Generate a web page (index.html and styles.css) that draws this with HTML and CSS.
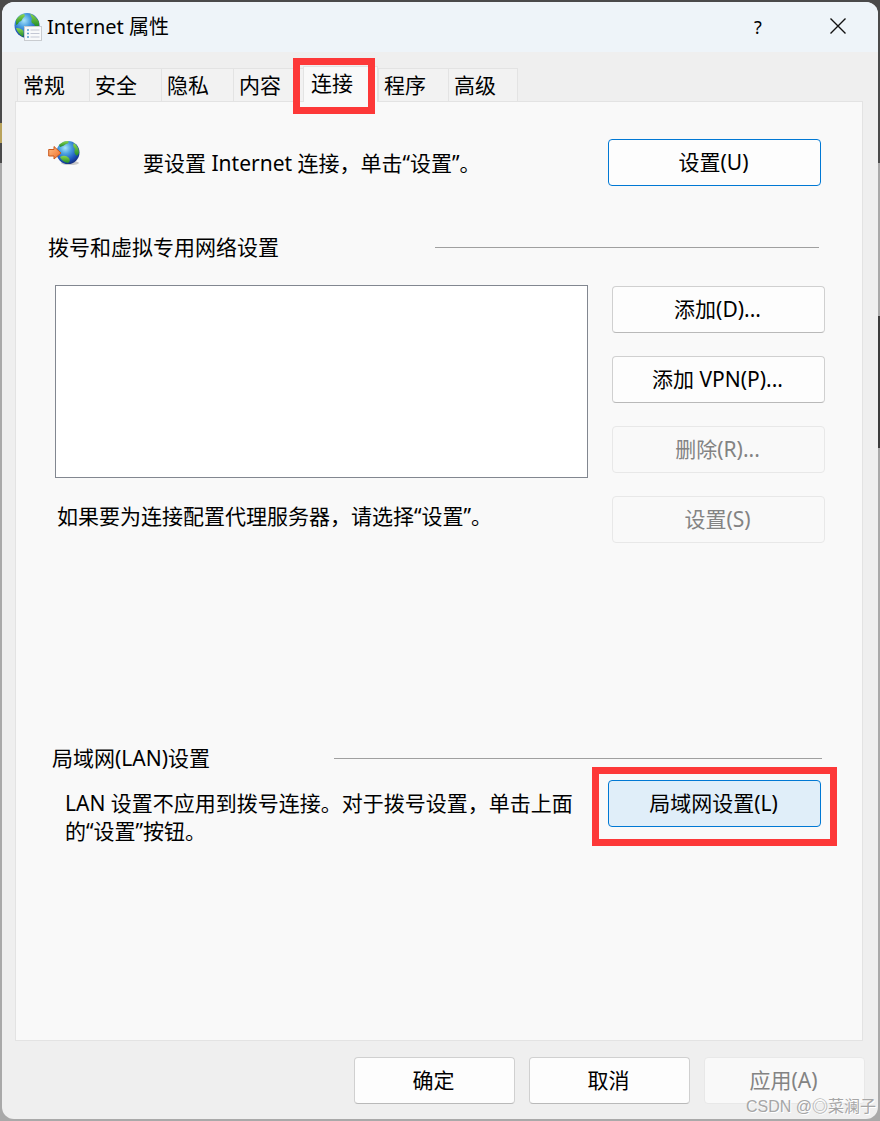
FILE: index.html
```html
<!DOCTYPE html>
<html lang="zh-CN">
<head>
<meta charset="utf-8">
<title>Internet 属性</title>
<link rel="stylesheet" href="styles.css">
</head>
<body>
<svg class="defs" width="0" height="0" aria-hidden="true">
  <defs>
    <radialGradient id="sea" cx="38%" cy="30%" r="75%">
      <stop offset="0" stop-color="#a9e4fa"/>
      <stop offset="0.35" stop-color="#4a9fe0"/>
      <stop offset="0.75" stop-color="#1c50b8"/>
      <stop offset="1" stop-color="#132a78"/>
    </radialGradient>
    <linearGradient id="land" x1="0" y1="0" x2="0" y2="1">
      <stop offset="0" stop-color="#8fd84c"/>
      <stop offset="1" stop-color="#1f8a2c"/>
    </linearGradient>
    <linearGradient id="arrow" x1="0" y1="0" x2="1" y2="1">
      <stop offset="0" stop-color="#ffc08a"/>
      <stop offset="1" stop-color="#ee6a24"/>
    </linearGradient>
  </defs>
</svg>
<main class="window">
  <header class="titlebar">
    <svg class="title-icon" viewBox="0 0 28 28" aria-hidden="true">
      <circle cx="13" cy="12.5" r="12.5" fill="url(#sea)"/>
      <path d="M2 7 Q5 2 10 1 Q12 3 9 5 Q8 8 5 9 Q4 12 2 12 Z" fill="url(#land)"/>
      <path d="M16 0.5 Q22 3 25 9 L25 13 Q21 15 20 11 Q16 10 18 6 Z" fill="url(#land)"/>
      <path d="M2 15 Q7 15 9.5 18 Q10 22 9 24 Q4 21 2 15 Z" fill="url(#land)"/>
      <rect x="10.5" y="13.5" width="17" height="14" fill="#f8f9fb" stroke="#c9ccd0"/>
      <path d="M13 17h2M13 20.5h2M13 24h2" stroke="#5b9bd0" stroke-width="1.5"/>
      <path d="M16.5 17h9M16.5 20.5h9M16.5 24h9" stroke="#c3c7d4"/>
    </svg>
    <h1 class="title">Internet 属性</h1>
    <button class="caption-button" type="button" aria-label="帮助">?</button>
    <button class="caption-button" type="button" aria-label="关闭">
      <svg class="close-icon" viewBox="0 0 16 16" aria-hidden="true"><path d="M0.5 0.5L15.5 15.5M15.5 0.5L0.5 15.5" stroke="#111" stroke-width="1.4"/></svg>
    </button>
  </header>

  <div class="tabs" role="tablist">
    <button class="tab" type="button" role="tab">常规</button>
    <button class="tab" type="button" role="tab">安全</button>
    <button class="tab" type="button" role="tab">隐私</button>
    <button class="tab" type="button" role="tab">内容</button>
    <button class="tab active" type="button" role="tab" aria-selected="true">连接<span class="mark tab-mark"></span></button>
    <button class="tab" type="button" role="tab">程序</button>
    <button class="tab" type="button" role="tab">高级</button>
  </div>

  <div class="panel" role="tabpanel">
    <div class="setup">
      <svg class="setup-icon" viewBox="0 0 32 26" aria-hidden="true">
        <ellipse cx="22" cy="23" rx="9" ry="2" fill="#c9c9c9"/>
        <circle cx="20" cy="12.5" r="11.5" fill="url(#sea)"/>
        <path d="M11 5 Q15 1 20 1 Q22 3 18 4 Q16 6 12 7 Z" fill="url(#land)"/>
        <path d="M26 3 Q31 7 31 13 L29 16 Q25 13 27 9 Q24 6 26 3 Z" fill="url(#land)"/>
        <path d="M12 17 Q17 14 21 18 Q23 21 20 23 Q14 22 12 17 Z" fill="url(#land)"/>
        <path d="M0.7 9.5H6V6.5L13 13L6 19V16H0.7Z" fill="url(#arrow)" stroke="#c9581c"/>
      </svg>
      <p class="setup-text">要设置 Internet 连接，单击“设置”。</p>
      <button class="button wide primary" type="button">设置(U)</button>
    </div>

    <div class="heading dial-heading">
      <h2 class="heading-text" id="dial">拨号和虚拟专用网络设置</h2>
      <span class="rule"></span>
    </div>
    <div class="dial">
      <div class="dial-main">
        <div class="list" role="listbox" aria-labelledby="dial" tabindex="0"></div>
        <p class="proxy-text">如果要为连接配置代理服务器，请选择“设置”。</p>
      </div>
      <div class="dial-actions">
        <button class="button wide" type="button">添加(D)...</button>
        <button class="button wide" type="button">添加 VPN(P)...</button>
        <button class="button wide" type="button" disabled>删除(R)...</button>
        <button class="button wide" type="button" disabled>设置(S)</button>
      </div>
    </div>

    <div class="heading lan-heading">
      <h2 class="heading-text">局域网(LAN)设置</h2>
      <span class="rule"></span>
    </div>
    <div class="lan">
      <p class="lan-text">LAN 设置不应用到拨号连接。对于拨号设置，单击上面的“设置”按钮。</p>
      <button class="button wide primary hot" type="button">局域网设置(L)<span class="mark button-mark"></span></button>
    </div>
  </div>

  <footer class="footer">
    <button class="button" type="button">确定</button>
    <button class="button" type="button">取消</button>
    <button class="button" type="button" disabled>应用(A)</button>
  </footer>
</main>
<div class="watermark">CSDN @◎菜澜子</div>
</body>
</html>
```

FILE: styles.css
```css
* {
  box-sizing: border-box;
}

body {
  margin: 0;
  padding: 2px;
  min-height: 100vh;
  display: flex;
  position: relative;
  background:
    linear-gradient(#3b3b3b, #3b3b3b) right 316px / 12px 132px no-repeat,
    linear-gradient(#b9a35c, #b9a35c) left 123px / 12px 20px no-repeat,
    linear-gradient(#4a4a4a 163px, #a9a9a9 163px);
  color: #000;
  font-family: "Noto Sans", "Noto Sans CJK SC", sans-serif;
  font-size: 21px;
  font-weight: 390;
  line-height: 28px;
}

button {
  font: inherit;
  color: inherit;
}

h1,
h2,
p {
  margin: 0;
  font-size: 21px;
  font-weight: inherit;
}

.defs {
  position: absolute;
}

.window {
  flex: 1;
  display: flex;
  flex-direction: column;
  overflow: hidden;
  border-radius: 12px;
  background: #efefef;
}

.titlebar {
  display: flex;
  align-items: center;
  height: 50px;
  padding-left: 12px;
  background: #eef4f9;
}

.title-icon {
  width: 28px;
  height: 28px;
}

.title {
  flex: 1;
  margin-left: 5px;
  font-size: 20px;
}

.caption-button {
  width: 80px;
  height: 50px;
  padding: 0;
  border: 0;
  background: none;
  font-size: 18px;
}

.close-icon {
  width: 16px;
  height: 16px;
}

.tabs {
  display: flex;
  align-items: flex-end;
  margin-top: 14px;
  padding-left: 15px;
}

.tab {
  width: 72px;
  height: 33px;
  padding: 0 0 0 5px;
  border: 1px solid #e3e3e3;
  border-width: 1px 0 0 1px;
  background: #f2f2f2;
  text-align: left;
}

.tab:last-child {
  border-right-width: 1px;
}

.tab.active {
  position: relative;
  z-index: 1;
  width: 75px;
  height: 36px;
  margin: 0 0 -1px -2px;
  padding: 0 0 3px 7px;
  border-right-width: 1px;
  background: #f9f9f9;
}

.tab.active ~ .tab {
  width: 70px;
}

.mark {
  position: absolute;
  border: 7px solid #fd3838;
  pointer-events: none;
}

.tab-mark {
  inset: -9px 2px -12px -11px;
}

.button-mark {
  inset: -14px -17px -20px;
}

.panel {
  flex: 1;
  margin: 0 15px 0 13px;
  padding-top: 37px;
  border: 1px solid #e3e3e3;
  background: #f9f9f9;
}

.button {
  width: 161px;
  height: 47px;
  padding: 0 2px 2px 0;
  border: 1px solid #d0d0d0;
  border-bottom-color: #b9b9b9;
  border-radius: 4px;
  background: #fdfdfd;
}

.button:disabled {
  border-color: #e8e8e8;
  background: #f9f9f9;
  color: #838383;
}

.button.wide {
  width: 213px;
  flex: none;
}

.button.primary {
  border-color: #0078d4;
}

.button.hot {
  position: relative;
  background: #e0eef9;
}

.setup {
  display: flex;
  padding: 0 41px 0 32px;
}

.setup-icon {
  width: 32px;
  height: 26px;
  margin-top: 1px;
}

.setup-text {
  flex: 1;
  margin-left: 63px;
  padding-top: 10px;
}

.heading {
  display: flex;
  align-items: center;
}

.rule {
  flex: 1;
  height: 1px;
  background: #a0a0a0;
}

.dial-heading {
  margin-top: 47px;
  padding: 0 43px 0 32px;
}

.dial-heading .heading-text {
  flex: 0 0 387px;
}

.dial {
  display: flex;
  gap: 24px;
  margin-top: 24px;
  padding: 0 37px 0 39px;
}

.dial-main {
  flex: 1;
}

.list {
  height: 193px;
  border: 1px solid #828790;
  background: #fff;
}

.proxy-text {
  margin-top: 24px;
  padding-left: 2px;
}

.dial-actions {
  display: flex;
  flex-direction: column;
  gap: 23px;
  padding-top: 1px;
}

.lan-heading {
  margin-top: 201px;
  padding: 0 40px 0 36px;
}

.lan-heading .heading-text {
  flex: 0 0 282px;
}

.lan {
  display: flex;
  gap: 24px;
  margin-top: 8px;
  padding: 0 41px 0 49px;
}

.lan-text {
  flex: 1;
  padding-top: 9px;
}

.footer {
  display: flex;
  justify-content: flex-end;
  gap: 14px;
  padding: 16px 13px 15px;
}

.watermark {
  position: absolute;
  right: 4px;
  bottom: 2px;
  color: #a6a6a6;
  font-family: "Liberation Sans", "Noto Sans CJK SC", sans-serif;
  font-size: 16px;
  line-height: 24px;
  text-shadow: 1px 1px 0 #fff;
}
```
